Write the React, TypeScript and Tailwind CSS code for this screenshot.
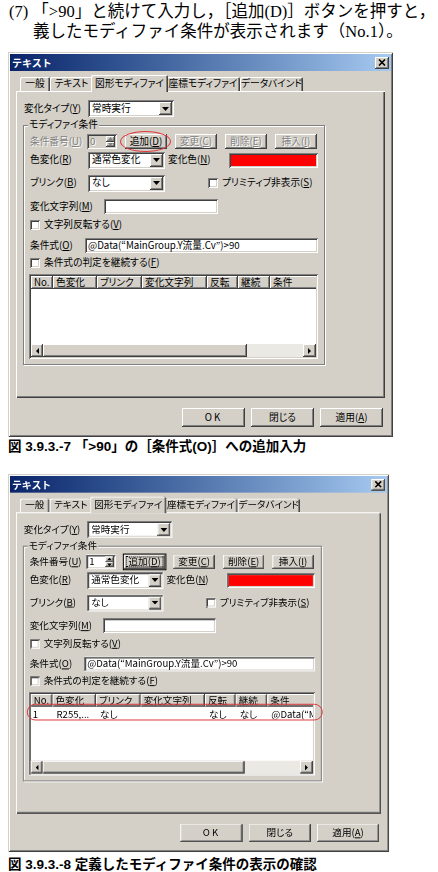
import type { ReactNode } from "react";

// classic 3D bevels
const RAISED =
  "bg-[#d4d0c8] shadow-[inset_-1px_-1px_#404040,inset_1px_1px_#ffffff,inset_-2px_-2px_#808080]";
const SUNKEN =
  "shadow-[inset_1px_1px_#808080,inset_-1px_-1px_#ffffff,inset_2px_2px_#404040,inset_-2px_-2px_#d4d0c8]";
const GRAY = "text-[#808080] [text-shadow:1px_1px_0_#ffffff]";

const columns = [
  { label: "No.", w: "w-[22px]" },
  { label: "色変化", w: "w-[44px]" },
  { label: "ブリンク", w: "w-[45px]" },
  { label: "変化文字列", w: "w-[65px]" },
  { label: "反転", w: "w-[31px]" },
  { label: "継続", w: "w-[32px]" },
  { label: "条件", w: "w-[60px]" },
];
const firstRow = ["1", "R255,...", "なし", "", "なし", "なし", "@Data(“M"];

function Key({ text, k }: { text: string; k: string }) {
  return (
    <>
      {text}(<span className="underline underline-offset-[1px]">{k}</span>)
    </>
  );
}

function Arrow({ dir, color = "#000" }: { dir: "up" | "down" | "left" | "right"; color?: string }) {
  if (dir === "down")
    return (
      <svg width="7" height="4" viewBox="0 0 7 4">
        <path d="M0 0H7L3.5 4Z" fill={color} />
      </svg>
    );
  if (dir === "up")
    return (
      <svg width="5" height="3" viewBox="0 0 5 3">
        <path d="M0 3H5L2.5 0Z" fill={color} />
      </svg>
    );
  if (dir === "left")
    return (
      <svg width="3" height="6" viewBox="0 0 3 6">
        <path d="M3 0V6L0 3Z" fill={color} />
      </svg>
    );
  return (
    <svg width="3" height="6" viewBox="0 0 3 6">
      <path d="M0 0V6L3 3Z" fill={color} />
    </svg>
  );
}

function Combo({ text, className }: { text: string; className: string }) {
  return (
    <div className={`${SUNKEN} bg-white h-[17px] flex p-[2px] ${className}`}>
      <span className="flex-1 pl-[2px] flex items-center">{text}</span>
      <span className={`${RAISED} w-[13px] flex items-center justify-center`}>
        <Arrow dir="down" />
      </span>
    </div>
  );
}

function Spin({ value, disabled }: { value: string; disabled: boolean }) {
  const c = disabled ? "#808080" : "#000";
  return (
    <div className={`${SUNKEN} ${disabled ? "bg-[#d4d0c8]" : "bg-white"} w-[30px] h-[15px] flex p-[2px]`}>
      <span className={`flex-1 pl-[1px] flex items-center ${disabled ? GRAY : ""}`}>{value}</span>
      <span className="w-[9px] flex flex-col">
        <span className={`${RAISED} flex-1 flex items-center justify-center`}>
          <Arrow dir="up" color={c} />
        </span>
        <span className={`${RAISED} flex-1 flex items-center justify-center`}>
          <svg width="5" height="3" viewBox="0 0 5 3">
            <path d="M0 0H5L2.5 3Z" fill={c} />
          </svg>
        </span>
      </span>
    </div>
  );
}

function Btn({
  children,
  disabled,
  focused,
  className = "w-[42px] h-[15px]",
}: {
  children: ReactNode;
  disabled?: boolean;
  focused?: boolean;
  className?: string;
}) {
  return (
    <div
      className={`${RAISED} ${className} flex items-center justify-center ${disabled ? GRAY : ""} ${
        focused ? "outline outline-1 outline-black" : ""
      }`}
    >
      {focused ? (
        <span className="border border-dotted border-black px-[2px] leading-[9px]">{children}</span>
      ) : (
        children
      )}
    </div>
  );
}

function Check({ children, className = "" }: { children: ReactNode; className?: string }) {
  return (
    <div className={`flex items-center gap-[4px] ${className}`}>
      <span className={`${SUNKEN} bg-white w-[10px] h-[10px] shrink-0`} />
      <span>{children}</span>
    </div>
  );
}

function Field({ className, children }: { className: string; children?: ReactNode }) {
  return (
    <div className={`${SUNKEN} bg-white h-[15px] flex items-center pl-[3px] whitespace-nowrap overflow-hidden ${className}`}>
      {children}
    </div>
  );
}

function Tab({ label, className, selected }: { label: string; className: string; selected?: boolean }) {
  return (
    <div
      className={`${className} bg-[#d4d0c8] rounded-t-[2px] flex items-center justify-center shadow-[inset_1px_1px_#ffffff,inset_-1px_0_#404040,inset_-2px_0_#808080] ${
        selected ? "h-[17px] -mb-[1px] -mx-[2px] relative z-10" : "h-[14px]"
      }`}
    >
      {label}
    </div>
  );
}

function ConditionList({ filled }: { filled: boolean }) {
  return (
    <div className="relative mt-[4px] ml-[5px] w-[289px] h-[85px]">
      <div className={`${SUNKEN} bg-white w-full h-full p-[2px] flex flex-col`}>
        <div className="flex h-[13px] overflow-hidden shrink-0">
          {columns.map((c) => (
            <div key={c.label} className={`${RAISED} ${c.w} shrink-0 flex items-center pl-[3px] whitespace-nowrap`}>
              {c.label}
            </div>
          ))}
        </div>
        {filled && (
          <div className="flex h-[13px] leading-[12px] overflow-hidden shrink-0">
            {columns.map((c, i) => (
              <div
                key={c.label}
                className={`${c.w} shrink-0 flex items-center whitespace-nowrap ${i === 0 ? "pl-[2px]" : "pl-[4px]"}`}
              >
                {firstRow[i]}
              </div>
            ))}
          </div>
        )}
        <div className="flex-1" />
        <div className="h-[13px] flex bg-[#ebe9e4] shrink-0">
          <span className={`${RAISED} w-[12px] flex items-center justify-center`}>
            <Arrow dir="left" />
          </span>
          <span className={`${RAISED} w-[204px]`} />
          <span className="flex-1" />
          <span className={`${RAISED} w-[13px] flex items-center justify-center`}>
            <Arrow dir="right" />
          </span>
        </div>
      </div>
      {filled && (
        <span className="absolute left-[-2px] right-[-8px] top-[12px] h-[17px] rounded-[9px] border-[1.5px] border-[#e0383c]" />
      )}
    </div>
  );
}

function PropertyDialog({ added }: { added: boolean }) {
  return (
    <div
      className={`w-[385px] h-[385px] bg-[#d4d0c8] p-[2px] flex flex-col text-black text-[9.7px] leading-none font-['Noto_Sans_CJK_JP',sans-serif] [font-feature-settings:'palt'] shadow-[inset_1px_1px_#d4d0c8,inset_-1px_-1px_#404040,inset_2px_2px_#ffffff,inset_-2px_-2px_#808080]`}
    >
      <div className="h-[17px] shrink-0 bg-linear-to-r from-[#0a246a] to-[#a6caf0] flex items-center justify-between px-[2px]">
        <span className="text-white font-bold text-[10px] [font-feature-settings:normal]">テキスト</span>
        <span className={`${RAISED} w-[14px] h-[12px] flex items-center justify-center`}>
          <svg width="8" height="7" viewBox="0 0 8 7">
            <path d="M1 0.5L7 6.5M7 0.5L1 6.5" stroke="#000" strokeWidth="1.6" />
          </svg>
        </span>
      </div>

      <div className="flex items-end h-[16px] mt-[4px] ml-[10px] shrink-0">
        <Tab label="一般" className="w-[30px]" />
        <Tab label="テキスト" className="w-[43px]" />
        <Tab label="図形モディファイ" className="w-[77px]" selected />
        <Tab label="座標モディファイ" className="w-[74px]" />
        <Tab label="データバインド" className="w-[63px]" />
      </div>

      <div className="ml-[6px] w-[369px] h-[307px] shrink-0 flex flex-col shadow-[inset_1px_1px_#ffffff,inset_-1px_-1px_#404040,inset_-2px_-2px_#808080]">
        <div className="flex items-center mt-[9px] ml-[8px] h-[17px]">
          <span className="w-[64px]">
            <Key text="変化タイプ" k="Y" />
          </span>
          <Combo text="常時実行" className="w-[86px]" />
        </div>

        <div className="relative mt-[8px] ml-[7px] w-[302px] h-[240px] border border-[#808080] shadow-[inset_1px_1px_#ffffff,1px_1px_#ffffff] flex flex-col">
          <span className="absolute -top-[6px] left-[4px] px-[1px] bg-[#d4d0c8]">モディファイ条件</span>

          <div className="flex items-center mt-[8px] ml-[6px] h-[15px]">
            <span className={`w-[57px] ${added ? "" : GRAY}`}>
              <Key text="条件番号" k="U" />
            </span>
            <Spin value={added ? "1" : "0"} disabled={!added} />
            <div className="relative ml-[8px]">
              <Btn focused={added}>
                <Key text="追加" k="D" />
              </Btn>
              {!added && (
                <span className="absolute -left-[5px] -right-[4px] -top-[3px] -bottom-[3px] rounded-[50%] border-[1.5px] border-[#e0383c]" />
              )}
            </div>
            <div className="ml-[8px]">
              <Btn disabled={!added}>
                <Key text="変更" k="C" />
              </Btn>
            </div>
            <div className="ml-[8px]">
              <Btn disabled={!added}>
                <Key text="削除" k="E" />
              </Btn>
            </div>
            <div className="ml-[8px]">
              <Btn disabled={!added}>
                <Key text="挿入" k="I" />
              </Btn>
            </div>
          </div>

          <div className="flex items-center mt-[3px] ml-[6px] h-[16px]">
            <span className="w-[58px]">
              <Key text="色変化" k="R" />
            </span>
            <Combo text="通常色変化" className="w-[77px] h-[16px]" />
            <span className="ml-[3px] w-[61px]">
              <Key text="変化色" k="N" />
            </span>
            <div className={`${SUNKEN} bg-white w-[89px] h-[15px] p-[2px]`}>
              <div className="w-full h-full bg-[#ff0000]" />
            </div>
          </div>

          <div className="flex items-center mt-[7px] ml-[6px] h-[16px]">
            <span className="w-[58px]">
              <Key text="ブリンク" k="B" />
            </span>
            <Combo text="なし" className="w-[77px] h-[16px]" />
            <Check className="ml-[43px]">
              <Key text="プリミティブ非表示" k="S" />
            </Check>
          </div>

          <div className="flex items-center mt-[8px] ml-[6px] h-[15px]">
            <span className="w-[74px]">
              <Key text="変化文字列" k="M" />
            </span>
            <Field className="w-[114px]" />
          </div>

          <Check className="mt-[4px] ml-[6px] h-[14px]">
            <Key text="文字列反転する" k="V" />
          </Check>

          <div className="flex items-center mt-[6px] ml-[6px] h-[15px]">
            <span className="w-[55px]">
              <Key text="条件式" k="O" />
            </span>
            <Field className="w-[233px]">@Data(“MainGroup.Y流量.Cv”)&gt;90</Field>
          </div>

          <Check className="mt-[3px] ml-[6px] h-[14px]">
            <Key text="条件式の判定を継続する" k="F" />
          </Check>

          <ConditionList filled={added} />
        </div>
      </div>

      <div className="flex justify-end gap-[6px] mt-[10px] pr-[8px]">
        <Btn className="w-[63px] h-[19px] tracking-[2px]">OK</Btn>
        <Btn className="w-[63px] h-[19px]">閉じる</Btn>
        <Btn className="w-[63px] h-[19px]">
          <Key text="適用" k="A" />
        </Btn>
      </div>
    </div>
  );
}

export default function App() {
  return (
    <div className="w-[438px] h-[872px] bg-white overflow-hidden flex flex-col">
      <div className="pt-[2px] h-[42px] text-[16.5px] leading-[20px] text-black whitespace-nowrap font-['Liberation_Serif','Noto_Sans_CJK_JP',serif]">
        <p className="pl-[9px]">(7) 「&gt;90」と続けて入力し，［追加(D)］ボタンを押すと，</p>
        <p className="pl-[33px]">義したモディファイ条件が表示されます（No.1）。</p>
      </div>

      <div className="ml-[8px] mt-[10px]">
        <PropertyDialog added={false} />
      </div>
      <p className="ml-[8px] mt-[1px] h-[17px] leading-[17px] text-[13.5px] font-bold whitespace-nowrap font-['Liberation_Sans','Noto_Sans_CJK_JP',sans-serif]">
        図 3.9.3.-7 「&gt;90」の［条件式(O)］への追加入力
      </p>

      <div className="ml-[8px] mt-[19px] h-[378px]">
        <div className="origin-top-left scale-x-[0.99] scale-y-[0.982]">
          <PropertyDialog added />
        </div>
      </div>
      <p className="ml-[8px] mt-[4px] h-[17px] leading-[17px] text-[13.5px] font-bold whitespace-nowrap font-['Liberation_Sans','Noto_Sans_CJK_JP',sans-serif]">
        図 3.9.3.-8 定義したモディファイ条件の表示の確認
      </p>
    </div>
  );
}
